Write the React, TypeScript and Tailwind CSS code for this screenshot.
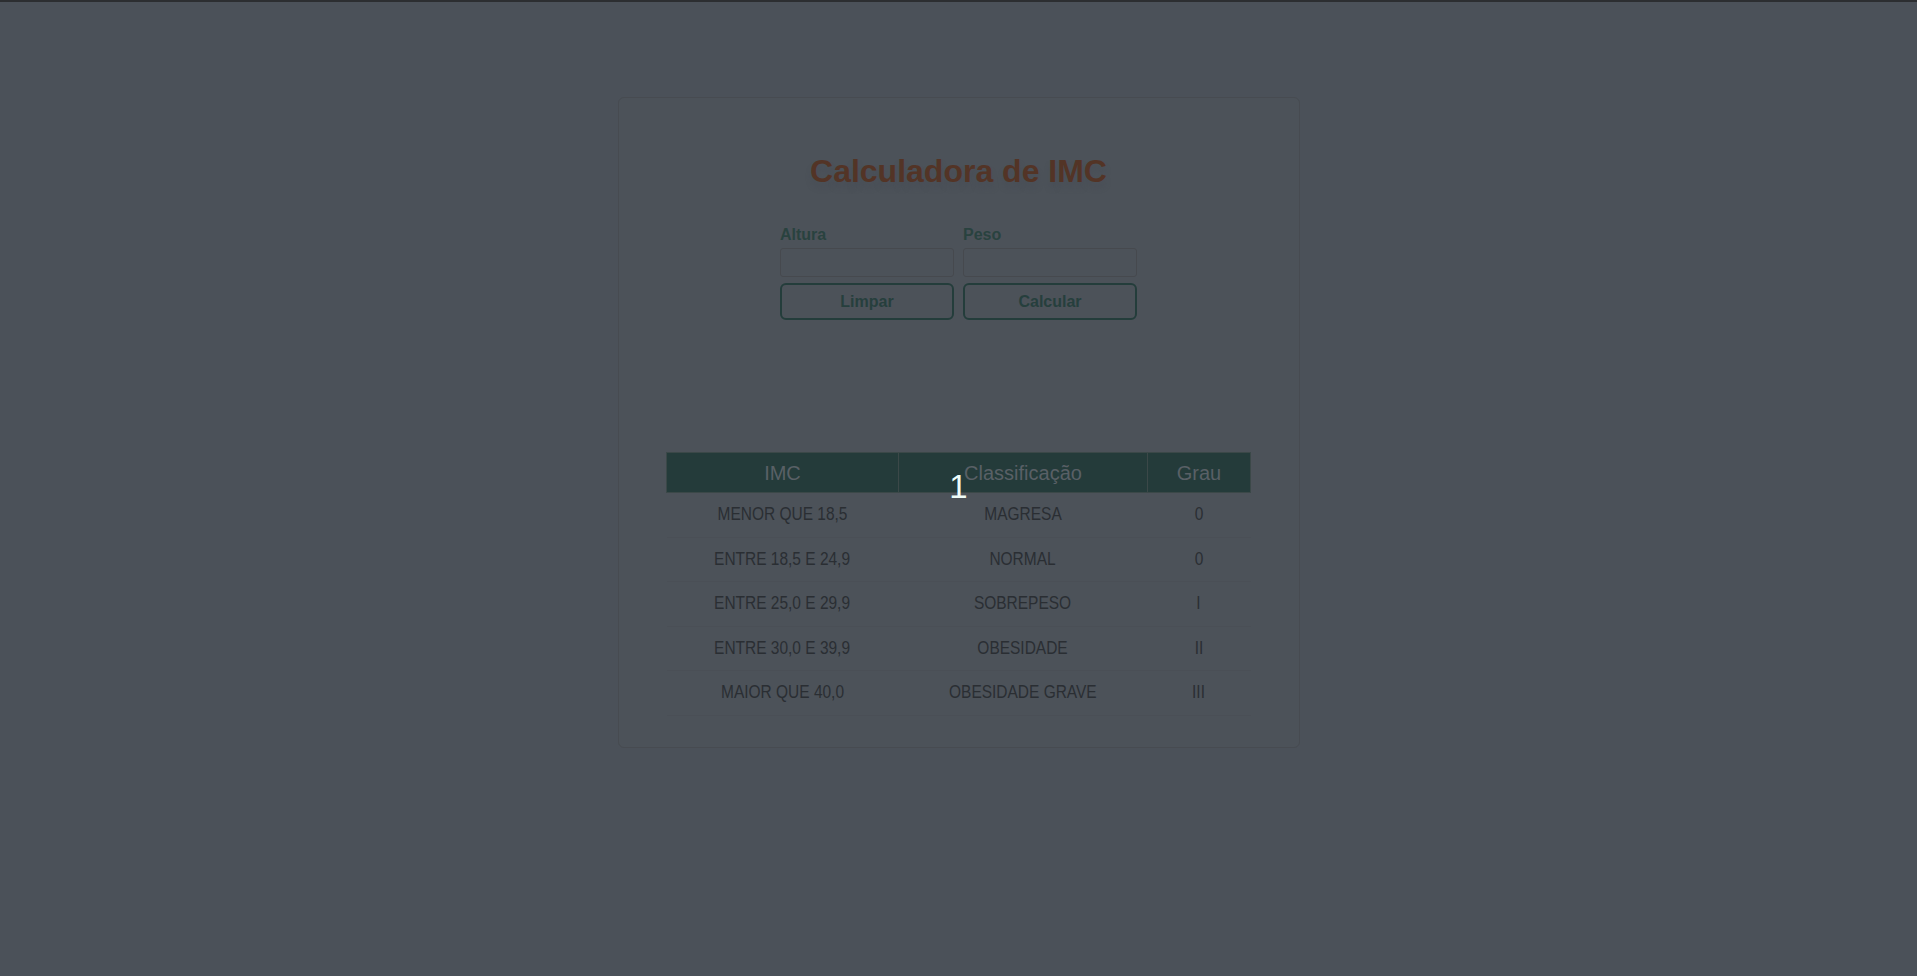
import React from "react";

const rows = [
  ["MENOR QUE 18,5", "MAGRESA", "0"],
  ["ENTRE 18,5 E 24,9", "NORMAL", "0"],
  ["ENTRE 25,0 E 29,9", "SOBREPESO", "I"],
  ["ENTRE 30,0 E 39,9", "OBESIDADE", "II"],
  ["MAIOR QUE 40,0", "OBESIDADE GRAVE", "III"],
];

export default function App() {
  return (
    <div
      className="relative min-h-[976px] w-full bg-[#4b5159] border-t-2 border-[#2c2e31] overflow-hidden"
      style={{ fontFamily: '"Liberation Sans", Arial, sans-serif' }}
    >
      <div className="mx-auto mt-[95px] w-[682px] h-[651px] rounded-md border border-[#474b51] bg-[#4c5259] flex flex-col items-center">
        <h1
          className="mt-[55px] text-[32px] leading-[36px] font-bold text-[#533426]"
          style={{ textShadow: "0 6px 5px rgba(72,78,86,0.8)" }}
        >
          Calculadora de IMC
        </h1>

        <div className="mt-[37px] w-[357px] grid grid-cols-2 gap-x-[9px]">
          <div className="flex flex-col">
            <label className="text-[16px] leading-[18px] font-bold text-[#29423f] mb-[4px]">Altura</label>
            <input className="h-[29px] w-full rounded-[3px] border border-[#46494e] bg-transparent outline-none" />
          </div>
          <div className="flex flex-col">
            <label className="text-[16px] leading-[18px] font-bold text-[#29423f] mb-[4px]">Peso</label>
            <input className="h-[29px] w-full rounded-[3px] border border-[#46494e] bg-transparent outline-none" />
          </div>
          <button className="mt-[6px] h-[37px] rounded-[6px] border-2 border-[#243d3b] bg-transparent text-[16px] font-bold text-[#263f3d]">
            Limpar
          </button>
          <button className="mt-[6px] h-[37px] rounded-[6px] border-2 border-[#243d3b] bg-transparent text-[16px] font-bold text-[#263f3d]">
            Calcular
          </button>
        </div>

        <table className="mt-[132px] w-[584px] border-collapse table-fixed">
          <colgroup>
            <col className="w-[232px]" />
            <col className="w-[249px]" />
            <col className="w-[103px]" />
          </colgroup>
          <thead>
            <tr className="h-[40px] bg-[#243b3a]">
              <th className="border border-[#3b4848] text-[20px] font-normal text-[#596066]">IMC</th>
              <th className="border border-[#3b4848] text-[20px] font-normal text-[#596066]">Classificação</th>
              <th className="border border-[#3b4848] text-[20px] font-normal text-[#596066]">Grau</th>
            </tr>
          </thead>
          <tbody>
            {rows.map((r, i) => (
              <tr key={i} className="h-[44.5px] border-b border-[#4a4f56]">
                {r.map((c, j) => (
                  <td key={j} className="text-center text-[18px] text-[#2a2e33]">
                    <span className="inline-block scale-x-[0.86] whitespace-nowrap">{c}</span>
                  </td>
                ))}
              </tr>
            ))}
          </tbody>
        </table>
      </div>

      <div className="absolute left-0 right-0 top-[467px] text-center text-[33px] leading-[36px] text-[#eefcf8]">
        1
      </div>
    </div>
  );
}
